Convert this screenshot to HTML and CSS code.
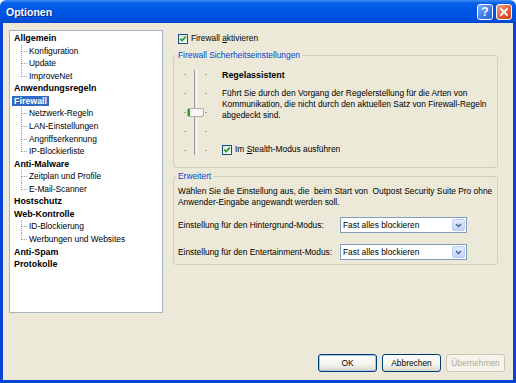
FILE: index.html
```html
<!DOCTYPE html>
<html lang="de">
<head>
    <meta charset="UTF-8">
    <meta name="viewport" content="width=device-width, initial-scale=1.0">
    <title>Optionen</title>
    <link rel="stylesheet" href="styles.css">
</head>
<body>
    <div class="window">
        <!-- Title bar -->
        <div class="titlebar">
            <span class="title">Optionen</span>
            <div class="title-buttons">
                <span class="tbtn help">?</span>
                <span class="tbtn close">
                    <svg width="10" height="10" viewBox="0 0 10 10"><path d="M1.5 1.5 L8.5 8.5 M8.5 1.5 L1.5 8.5" stroke="#fff" stroke-width="1.8"/></svg>
                </span>
            </div>
        </div>

        <div class="client">
            <div class="main">
                <!-- Navigation tree -->
                <div class="tree">
                    <ul class="tree-root">
                        <li><span class="node">Allgemein</span>
                            <ul class="tree-sub">
                                <li>Konfiguration</li>
                                <li>Update</li>
                                <li>ImproveNet</li>
                            </ul>
                        </li>
                        <li><span class="node">Anwendungsregeln</span></li>
                        <li><span class="node selected">Firewall</span>
                            <ul class="tree-sub">
                                <li>Netzwerk-Regeln</li>
                                <li>LAN-Einstellungen</li>
                                <li>Angriffserkennung</li>
                                <li>IP-Blockierliste</li>
                            </ul>
                        </li>
                        <li><span class="node">Anti-Malware</span>
                            <ul class="tree-sub">
                                <li>Zeitplan und Profile</li>
                                <li>E-Mail-Scanner</li>
                            </ul>
                        </li>
                        <li><span class="node">Hostschutz</span></li>
                        <li><span class="node">Web-Kontrolle</span>
                            <ul class="tree-sub">
                                <li>ID-Blockierung</li>
                                <li>Werbungen und Websites</li>
                            </ul>
                        </li>
                        <li><span class="node">Anti-Spam</span></li>
                        <li><span class="node">Protokolle</span></li>
                    </ul>
                </div>

                <!-- Settings panel -->
                <div class="panel">
                    <label class="check top-check">
                        <span class="box"><svg width="10" height="10" viewBox="0 0 10 10"><rect x="0.5" y="0.5" width="9" height="9" fill="url(#cb)" stroke="#1C5180"/><defs><linearGradient id="cb" x1="0" y1="0" x2="1" y2="1"><stop offset="0" stop-color="#DCDCD7"/><stop offset="1" stop-color="#FFFFFF"/></linearGradient></defs><path d="M2.3 4.6 L4.1 6.6 L7.8 2.6" fill="none" stroke="#21A121" stroke-width="1.6"/></svg></span>
                        <span>Firewall <u>a</u>ktivieren</span>
                    </label>

                    <fieldset class="group group-security">
                        <legend>Firewall Sicherheitseinstellungen</legend>
                        <div class="security">
                            <div class="slider">
                                <div class="ticks"><span></span><span></span><span></span><span></span><span></span></div>
                                <div class="track"></div>
                                <div class="ticks"><span></span><span></span><span></span><span></span><span></span></div>
                                <div class="thumb"></div>
                            </div>
                            <div class="level">
                                <div class="level-title">Regelassistent</div>
                                <p class="level-desc">Führt Sie durch den Vorgang der Regelerstellung für die Arten von<br>Kommunikation, die nicht durch den aktuellen Satz von Firewall-Regeln<br>abgedeckt sind.</p>
                                <label class="check stealth">
                                    <span class="box"><svg width="10" height="10" viewBox="0 0 10 10"><rect x="0.5" y="0.5" width="9" height="9" fill="url(#cb)" stroke="#1C5180"/><path d="M2.3 4.6 L4.1 6.6 L7.8 2.6" fill="none" stroke="#21A121" stroke-width="1.6"/></svg></span>
                                    <span>Im <u>S</u>tealth-Modus ausführen</span>
                                </label>
                            </div>
                        </div>
                    </fieldset>

                    <fieldset class="group group-advanced">
                        <legend>Erweitert</legend>
                        <p class="intro">Wählen Sie die Einstellung aus, die&nbsp; beim Start von&nbsp; Outpost Security Suite Pro ohne<br>Anwender-Eingabe angewandt werden soll.</p>
                        <div class="field-row">
                            <span class="field-label">Einstellung für den Hintergrund-Modus:</span>
                            <div class="combo">
                                <span>Fast alles blockieren</span>
                                <span class="combo-btn"><svg width="7" height="5" viewBox="0 0 7 5"><path d="M1 1 L3.5 3.5 L6 1" fill="none" stroke="#4D6185" stroke-width="1.4"/></svg></span>
                            </div>
                        </div>
                        <div class="field-row">
                            <span class="field-label">Einstellung für den Entertainment-Modus:</span>
                            <div class="combo">
                                <span>Fast alles blockieren</span>
                                <span class="combo-btn"><svg width="7" height="5" viewBox="0 0 7 5"><path d="M1 1 L3.5 3.5 L6 1" fill="none" stroke="#4D6185" stroke-width="1.4"/></svg></span>
                            </div>
                        </div>
                    </fieldset>
                </div>
            </div>

            <!-- Dialog buttons -->
            <div class="buttons">
                <button class="btn default">OK</button>
                <button class="btn">Abbrechen</button>
                <button class="btn" disabled>Übernehmen</button>
            </div>
        </div>
    </div>
</body>
</html>
```

FILE: styles.css
```css
/* General */
body {
    margin: 0;
    font-family: "Liberation Sans", Arial, sans-serif;
    font-size: 8.4px;
    color: #000;
    background: #fff;
}

.window {
    width: 516px;
    height: 383px;
    display: flex;
    flex-direction: column;
}

/* Title bar */
.titlebar {
    height: 23px;
    flex: none;
    box-sizing: border-box;
    display: flex;
    align-items: center;
    justify-content: space-between;
    padding: 0 4px 0 6px;
    background: linear-gradient(to bottom, #3D8DF5 0, #0A61EA 3px, #0058E6 8px, #0054E3 14px, #004FDC 20px, #0047CC 23px);
    border-radius: 6px 6px 0 0;
}

.title {
    color: #fff;
    font-weight: bold;
    font-size: 10.5px;
    text-shadow: 1px 1px #0F2A8A;
}

.title-buttons {
    display: flex;
    gap: 3px;
}

.tbtn {
    width: 16px;
    height: 16px;
    box-sizing: border-box;
    border: 1px solid #fff;
    border-radius: 3px;
    display: flex;
    align-items: center;
    justify-content: center;
}

.help {
    background: linear-gradient(135deg, #7AAEFB, #3A78EA 60%, #2A62D6);
    color: #fff;
    font-weight: bold;
    font-size: 12px;
}

.close {
    background: linear-gradient(135deg, #F0A080, #E0603A 55%, #C8431E);
}

/* Client area */
.client {
    flex: 1;
    display: flex;
    flex-direction: column;
    background: #ECE9D8;
    border: 3px solid #0843D6;
    border-top: 0;
}

.main {
    display: flex;
    gap: 10px;
    padding: 7px 0 0 6px;
}

/* Tree */
.tree {
    width: 154px;
    height: 283px;
    box-sizing: border-box;
    border: 1px solid #A5B3C4;
    background: #fff;
    padding: 1px 0 0 4px;
}

.tree ul {
    list-style: none;
    margin: 0;
    padding: 0;
}

.tree li {
    line-height: 12.56px;
    white-space: nowrap;
}

.node {
    font-weight: bold;
    font-size: 8.9px;
}

.node.selected {
    background: #316AC5;
    color: #fff;
    padding: 0 2px;
    margin-left: -2px;
}

.tree-sub li {
    padding-left: 15px;
    background:
        repeating-linear-gradient(to bottom, #A0A0A0 0 1px, transparent 1px 2px) no-repeat 7px 0 / 1px 100%,
        repeating-linear-gradient(to right, #A0A0A0 0 1px, transparent 1px 2px) no-repeat 8px 6px / 6px 1px;
}

.tree-sub li:last-child {
    background:
        repeating-linear-gradient(to bottom, #A0A0A0 0 1px, transparent 1px 2px) no-repeat 7px 0 / 1px 7px,
        repeating-linear-gradient(to right, #A0A0A0 0 1px, transparent 1px 2px) no-repeat 8px 6px / 6px 1px;
}

/* Panel */
.panel {
    width: 325px;
    display: flex;
    flex-direction: column;
}

.check {
    display: flex;
    align-items: center;
    gap: 3px;
    line-height: 11px;
}

.box {
    width: 10px;
    height: 10px;
    display: flex;
}

.top-check {
    margin: 3px 0 0 5px;
}

.group {
    margin: 0;
    min-width: 0;
    border: 1px solid #D0D0BF;
    border-radius: 3px;
    padding: 0 4px;
}

.group legend {
    color: #0046D5;
    line-height: 10px;
    padding: 0 2px;
    margin-left: -2px;
}

.group-security {
    margin-top: 6px;
    padding-bottom: 12px;
}

.group-advanced {
    margin-top: 3px;
    padding-bottom: 4px;
}

/* Security level slider */
.security {
    display: flex;
    align-items: flex-start;
    gap: 15px;
}

.slider {
    position: relative;
    display: flex;
    gap: 8px;
    height: 85px;
    margin: 10px 0 0 6px;
}

.ticks {
    display: flex;
    flex-direction: column;
    justify-content: space-between;
    padding: 4px 0;
}

.ticks span {
    display: block;
    width: 2px;
    height: 1px;
    background: #A8A79E;
}

.track {
    width: 3px;
    box-sizing: border-box;
    border-left: 1px solid #9D9C99;
    border-right: 1px solid #fff;
    background: #E4E2D6;
}

.thumb {
    position: absolute;
    left: 3px;
    top: 38px;
    width: 17px;
    height: 9px;
    box-sizing: border-box;
    border: 1px solid #B2B0A6;
    border-radius: 2px;
    background: linear-gradient(to right, #21A121 0 2px, #F7F7F4 2px 15px, #21A121 15px);
}

.level-title {
    font-weight: bold;
    font-size: 8.9px;
    line-height: 11px;
    margin-top: 10px;
}

.level-desc {
    margin: 7px 0 0;
    line-height: 11px;
    white-space: nowrap;
}

.stealth {
    margin-top: 23px;
}

/* Advanced */
.intro {
    margin: 5px 0 0;
    line-height: 10.5px;
    white-space: nowrap;
}

.field-row {
    display: flex;
    align-items: center;
    margin-top: 10px;
}

.field-row + .field-row {
    margin-top: 11px;
}

.field-label {
    width: 162px;
    flex: none;
}

.combo {
    width: 127px;
    height: 16px;
    box-sizing: border-box;
    border: 1px solid #7F9DB9;
    background: #fff;
    display: flex;
    align-items: center;
    justify-content: space-between;
    padding: 1px 1px 1px 2px;
}

.combo-btn {
    width: 13px;
    height: 12px;
    box-sizing: border-box;
    border: 1px solid #BCCDF7;
    border-radius: 2px;
    background: linear-gradient(to bottom, #E3EBFE, #C1D3FB);
    display: flex;
    align-items: center;
    justify-content: center;
}

/* Dialog buttons */
.buttons {
    margin-top: auto;
    display: flex;
    justify-content: flex-end;
    gap: 5px;
    padding: 0 8px 8px 0;
}

.btn {
    width: 59px;
    height: 18px;
    box-sizing: border-box;
    border: 1px solid #003C74;
    border-radius: 3px;
    background: linear-gradient(to bottom, #FFFFFF, #F3F3EE 60%, #D9D5CA);
    font-family: inherit;
    font-size: 8.4px;
    color: #000;
    padding: 0;
}

.btn.default {
    box-shadow: inset 0 0 0 1px #A9C3EE;
}

.btn:disabled {
    border-color: #C9C7BA;
    color: #ACA899;
    background: #F5F4EA;
}
```
